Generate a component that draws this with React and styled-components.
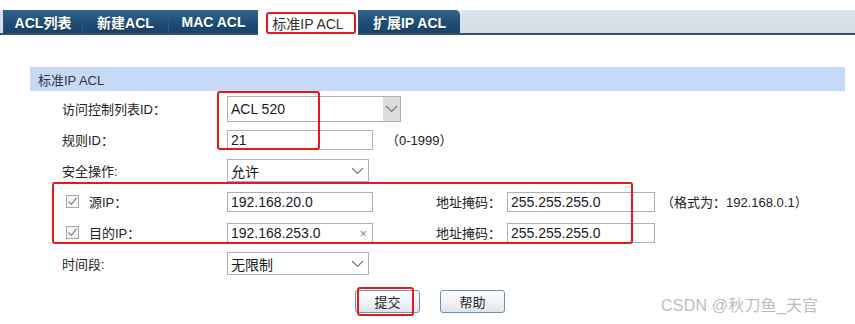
import React from "react";
import styled, { createGlobalStyle } from "styled-components";

const Global = createGlobalStyle`
  html, body { margin: 0; padding: 0; background: #fff; }
  body { font-family: "Liberation Sans", "Noto Sans CJK SC", Arial, sans-serif; }
`;

const Page = styled.div`
  position: relative;
  width: 855px;
  height: 324px;
  overflow: hidden;
  background: #fff;
  font-size: 13px;
  color: #222;
`;

const TabBar = styled.div`
  margin-top: 10px;
  height: 23px;
  display: flex;
  padding-left: 3px;
  background: linear-gradient(#dde4ed, #d4dce7);
  border-bottom: 2px solid #34536f;
`;

const Tab = styled.div`
  width: ${(p) => p.$w}px;
  height: 23px;
  display: flex;
  align-items: center;
  justify-content: center;
  box-sizing: border-box;
  font-weight: ${(p) => (p.$active ? "normal" : "bold")};
  font-size: 14px;
  color: ${(p) => (p.$active ? "#333" : "#fff")};
  background: ${(p) =>
    p.$active ? "#fff" : "linear-gradient(#2f6590, #1f4c74 60%, #1a4269)"};
  border-left: ${(p) => (p.$active ? "none" : "1px solid #2a5880")};
  border-top-right-radius: ${(p) => (p.$last ? 5 : 0)}px;
  border-top-left-radius: ${(p) => (p.$active ? 3 : 0)}px;
  ${(p) => (p.$active ? "margin-bottom:-2px;height:25px;" : "")}
  text-shadow: ${(p) => (p.$active ? "none" : "0 1px 1px rgba(0,0,0,0.3)")};
`;

const Panel = styled.div`
  margin: 32px 10px 0 30px;
`;

const PanelHeader = styled.div`
  height: 24px;
  background: #c6daf8;
  display: flex;
  align-items: center;
  padding-left: 8px;
  color: #333;
  font-size: 13px;
`;

const Form = styled.div`
  margin-top: 2px;
  padding-left: 32px;
`;

const Row = styled.div`
  height: 31px;
  display: flex;
  align-items: center;
`;

const Label = styled.div`
  width: ${(p) => p.$w || 165}px;
  flex: none;
  display: flex;
  align-items: center;
  color: #222;
  font-size: 13px;
  white-space: nowrap;
  margin-left: ${(p) => p.$ml || 0}px;
`;

const Check = styled.span`
  width: 13px;
  height: 13px;
  border: 1px solid #a8a8a8;
  background: #f6f6f6;
  margin: 0 10px 0 4px;
  display: inline-flex;
  align-items: center;
  justify-content: center;
  box-sizing: border-box;
`;

const InputBox = styled.div`
  position: relative;
  width: ${(p) => p.$w}px;
  height: ${(p) => p.$h || 20}px;
  box-sizing: border-box;
  border: 1px solid #a7b3c3;
  background: #fff;
  display: flex;
  align-items: center;
  padding-left: 3px;
  font-size: 14px;
  color: #1a1a1a;
  flex: none;
`;

const Select = styled(InputBox)`
  justify-content: space-between;
  padding-right: 0;
`;

const ArrowBox = styled.span`
  width: ${(p) => (p.$btn ? 17 : 22)}px;
  align-self: stretch;
  display: flex;
  align-items: center;
  justify-content: center;
  background: ${(p) => (p.$btn ? "#dcdcdc" : "transparent")};
`;

const Clear = styled.span`
  position: absolute;
  right: 5px;
  top: 50%;
  transform: translateY(-50%);
  color: #888;
  font-size: 13px;
`;

const Hint = styled.span`
  margin-left: ${(p) => p.$ml}px;
  color: #222;
  font-size: 13px;
  white-space: nowrap;
`;

const ButtonRow = styled.div`
  display: flex;
  gap: 20px;
  padding-left: 325px;
  margin-top: 11px;
`;

const Button = styled.button`
  width: 65px;
  height: 23px;
  border: 1px solid #6f8fb3;
  border-radius: 3px;
  background: linear-gradient(#ffffff, #eef1f5 60%, #dfe4ea);
  font-family: "Noto Sans CJK SC", "Liberation Sans", sans-serif;
  font-size: 13px;
  color: #222;
  padding: 0;
`;

const RedBox = styled.div`
  position: absolute;
  left: ${(p) => p.$x}px;
  top: ${(p) => p.$y}px;
  width: ${(p) => p.$w}px;
  height: ${(p) => p.$h}px;
  box-sizing: border-box;
  border: 2.5px solid #e8191c;
  border-radius: 3px;
  pointer-events: none;
`;

const Watermark = styled.div`
  position: absolute;
  left: 661px;
  top: 292px;
  font-size: 16px;
  color: #bdbdbd;
  font-family: "Liberation Sans", "Noto Sans CJK SC", sans-serif;
  letter-spacing: 0.2px;
`;

const Chevron = () => (
  <svg width="13" height="8" viewBox="0 0 13 8">
    <path d="M1 1 L6.5 6.5 L12 1" fill="none" stroke="#777" strokeWidth="1.2" />
  </svg>
);

const Tick = () => (
  <svg width="11" height="11" viewBox="0 0 11 11">
    <path d="M1.5 5.5 L4.3 8.3 L9.5 2" fill="none" stroke="#8a8a8a" strokeWidth="1.3" />
  </svg>
);

const tabs = [
  { t: "ACL列表", w: 79 },
  { t: "新建ACL", w: 86 },
  { t: "MAC ACL", w: 90 },
  { t: "标准IP ACL", w: 100, active: true },
  { t: "扩展IP ACL", w: 102, last: true },
];

export default function App() {
  return (
    <Page>
      <Global />
      <TabBar>
        {tabs.map((t) => (
          <Tab key={t.t} $w={t.w} $active={t.active} $last={t.last}>
            {t.t}
          </Tab>
        ))}
      </TabBar>
      <Panel>
        <PanelHeader>标准IP ACL</PanelHeader>
        <Form>
          <Row>
            <Label>访问控制列表ID：</Label>
            <Select $w={174} $h={26}>
              ACL 520
              <ArrowBox $btn>
                <Chevron />
              </ArrowBox>
            </Select>
          </Row>
          <Row>
            <Label>规则ID：</Label>
            <InputBox $w={146}>21</InputBox>
            <Hint $ml={13}>（0-1999）</Hint>
          </Row>
          <Row>
            <Label>安全操作:</Label>
            <Select $w={142} $h={23}>
              允许
              <ArrowBox>
                <Chevron />
              </ArrowBox>
            </Select>
          </Row>
          <Row>
            <Label>
              <Check>
                <Tick />
              </Check>
              源IP：
            </Label>
            <InputBox $w={146}>192.168.20.0</InputBox>
            <Label $w={71} $ml={63}>地址掩码：</Label>
            <InputBox $w={148}>255.255.255.0</InputBox>
            <Hint $ml={6}>（格式为：192.168.0.1）</Hint>
          </Row>
          <Row>
            <Label>
              <Check>
                <Tick />
              </Check>
              目的IP：
            </Label>
            <InputBox $w={146}>
              192.168.253.0
              <Clear>×</Clear>
            </InputBox>
            <Label $w={71} $ml={63}>地址掩码：</Label>
            <InputBox $w={148}>255.255.255.0</InputBox>
          </Row>
          <Row>
            <Label>时间段:</Label>
            <Select $w={142} $h={23}>
              无限制
              <ArrowBox>
                <Chevron />
              </ArrowBox>
            </Select>
          </Row>
        </Form>
        <ButtonRow>
          <Button>提交</Button>
          <Button>帮助</Button>
        </ButtonRow>
      </Panel>
      <RedBox $x={266} $y={12} $w={90} $h={22} />
      <RedBox $x={217} $y={91} $w={103} $h={59} />
      <RedBox $x={52} $y={182} $w={581} $h={62} />
      <RedBox $x={357} $y={287} $w={57} $h={29} />
      <Watermark>CSDN @秋刀鱼_天官</Watermark>
    </Page>
  );
}
